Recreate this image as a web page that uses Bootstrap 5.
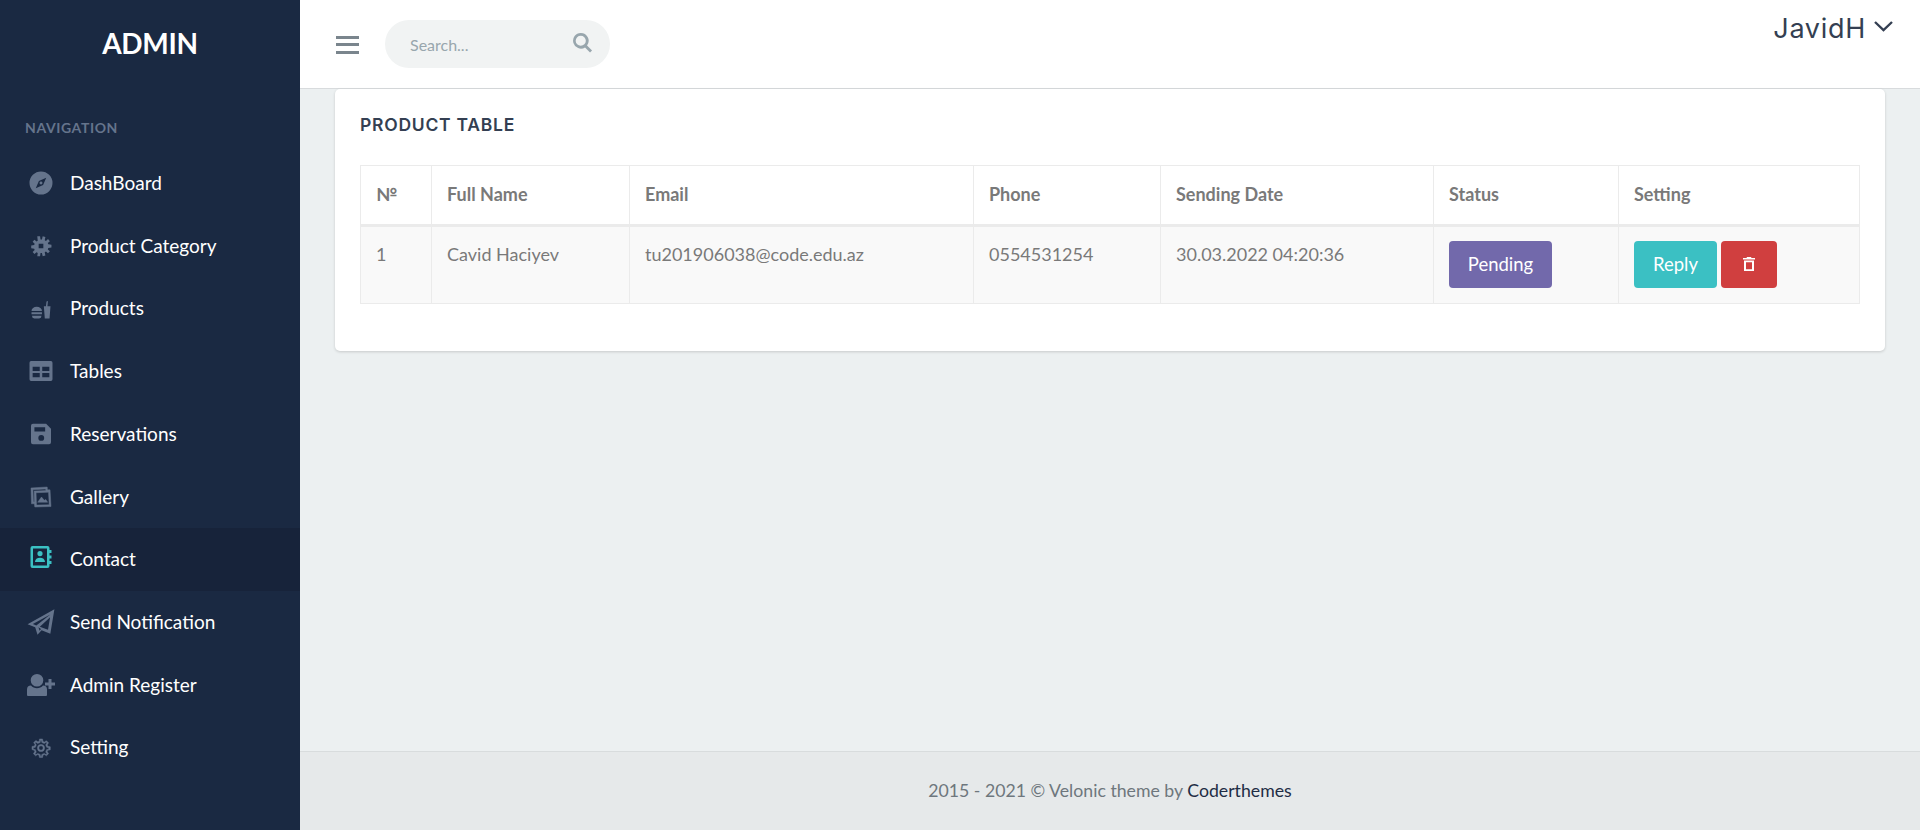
<!DOCTYPE html>
<html lang="en">
<head>
  <meta charset="UTF-8" />
  <meta name="viewport" content="width=device-width, initial-scale=1">
  <title>Admin - Contact</title>
  <link href="https://cdn.jsdelivr.net/npm/bootstrap@5.3.3/dist/css/bootstrap.min.css" rel="stylesheet" />
  <style>
body {
  font-family: Lato, "Liberation Sans", sans-serif;
  font-size: 18px;
  background: #ecf0f1;
  color: #797979;
  overflow: hidden;
}
.page-wrap { height: 830px; }
.side-bar { width: 300px; background: #1a2942; flex-shrink: 0; }
.side-logo { height: 88px; color: #fff; font-size: 28px; font-weight: 700; letter-spacing: -0.3px; line-height: 86px; text-align: center; }
.side-title { color: #65748c; font-size: 14px; font-weight: 700; letter-spacing: .6px; padding: 30px 25px 0; line-height: 20px; height: 64px; }
.side-link { height: 62.7px; padding-left: 27px; gap: 15px; color: #fff; font-size: 19px; text-decoration: none; }
.side-link:hover { color: #fff; }
.side-link.current { background: #17233a; }
.side-link svg { width: 28px; height: 28px; fill: #65748c; flex-shrink: 0; }
.side-link svg.thick-icon { stroke: #65748c; stroke-width: .5; }
.side-link.current svg { fill: #3bc0c3; }
.main-col { min-width: 0; }
.top-bar { height: 89px; background: #fff; border-bottom: 1px solid #d8dbdd; padding-left: 36px; }
.menu-btn { width: 23px; height: 18px; border-top: 3px solid #7a858d; border-bottom: 3px solid #7a858d; position: relative; margin-top: 1px; }
.menu-btn::after { content: ""; position: absolute; left: 0; right: 0; top: 4.5px; height: 3px; background: #7a858d; }
.search-box { width: 225px; height: 48px; margin-left: 26px; background: #f1f3f3; border-radius: 24px; padding: 0 17px 0 25px; }
.search-box input { border: 0; background: none; outline: 0; width: 150px; font-size: 16px; color: #98a6ad; font-family: inherit; padding: 1px 0 0; }
.search-box input::placeholder { color: #98a6ad; }
.search-box svg { width: 21px; height: 21px; fill: #98a6ad; margin-top: -3px; }
.user-name { font-family: Inter, "Open Sans", sans-serif; font-size: 27px; color: #343f52; line-height: 30px; margin: 14px 26px 0 0; letter-spacing: .7px; }
.user-name svg { width: 21px; height: 12px; margin-left: 7px; margin-top: -9px; }
.content-area { padding: 0 35px; }
.table-panel { height: 262px; border: 0; border-radius: 5px; box-shadow: 0 1px 3px rgba(0,0,0,.16); padding: 24px 25px; color: #797979; }
.panel-heading { font-family: Inter, "Open Sans", sans-serif; font-size: 17.5px; font-weight: 600; letter-spacing: .75px; color: #343f52; line-height: 24px; margin-bottom: 28px; }
.data-table { table-layout: fixed; width: 1500px; margin: 0; color: #797979; --bs-table-color: #797979; --bs-table-border-color: #ebebeb; --bs-table-striped-color: #797979; --bs-table-striped-bg: #f9f9f9; border-color: #ebebeb; }
.data-table > :not(caption) > * > * { padding: 15px; box-shadow: none; }
.data-table > thead > tr > th { height: 59px; font-size: 18px; font-weight: 700; color: #797979; border-bottom-width: 3px; vertical-align: middle; padding-bottom: 16px; }
.data-table > tbody > tr > td { height: 78px; font-size: 18px; padding-top: 14px; vertical-align: top; }
.data-table > tbody { border-top: 0; }
.data-table tbody tr { background: #f9f9f9; }
.col-no { width: 71px; } .col-name { width: 198px; } .col-mail { width: 344px; } .col-phone { width: 187px; }
.col-date { width: 273px; } .col-state { width: 185px; }
.act-btn { height: 47px; border: 0; border-radius: 4px; color: #fff; font-size: 18.5px; padding: 0; }
.act-btn:hover { color: #fff; }
.act-pending { width: 103px; background: #7269ab; }
.act-reply { width: 83px; background: #3bc0c3; margin-right: 4px; }
.act-del { width: 56px; background: #d03f3f; }
.act-del svg { width: 12px; height: 14px; fill: #fff; margin-top: -3px; }
.page-foot { height: 79px; background: #e6e9ea; border-top: 1px solid #d8dcdd; color: #6e777d; font-size: 17.7px; }
.page-foot a { color: #1f2d45; text-decoration: none; }
  </style>
</head>
<body>
  <div class="d-flex page-wrap">
    <aside class="side-bar">
      <div class="side-logo">ADMIN</div>
      <div class="side-title">NAVIGATION</div>
      <nav class="d-flex flex-column">
        <a class="side-link d-flex align-items-center" href="#">
          <svg viewBox="-1.400 -1.400 26.800 26.800"><path fill-rule="evenodd" d="M12 1a11 11 0 1 0 0 22 11 11 0 0 0 0-22zm5 6-3 7-7 3 3-7zm-5 3.600a1.400 1.400 0 1 0 0 2.800 1.400 1.400 0 0 0 0-2.800z"/></svg>
          DashBoard</a>
        <a class="side-link d-flex align-items-center" href="#">
          <svg viewBox="-3 -3 30 30"><path fill-rule="evenodd" d="M8 1.500h3l.5 3.500h1.500l.8-3.500 2.900.8-.7 3.500 1.300.8 2.200-2 2 2.200-2.200 2 .5 1.400 3.400.5v3l-3.400.5-.5 1.500 2.200 2-2 2.200-2.200-2-1.300.8.7 3.500-2.900.8-.8-3.500H11.500L11 23H8l.5-3.600-1.300-.8-2.200 2L3 18.400l2.200-2-.5-1.500-3.200-.5v-3l3.200-.5.5-1.400L3 7.500l2-2.200 2.200 2 1.300-.8zm1.500 8v5h5v-5z"/></svg>
          Product Category</a>
        <a class="side-link d-flex align-items-center" href="#">
          <svg viewBox="-2.750 -2.750 29.500 29.500"><path d="M15 9h2.200l.6-5 1.500-.3-.5 5.300H22l-1 13h-5zM2 14a5 4 0 0 1 11 0zM2 15.500h11v2H2zM2.500 19h10a3 3 0 0 1-2.500 3H5a3 3 0 0 1-2.500-3z"/></svg>
          Products</a>
        <a class="side-link d-flex align-items-center" href="#">
          <svg viewBox="-1.400 -1.400 26.800 26.800"><path fill-rule="evenodd" d="M2.500 2.500h19A1.500 1.500 0 0 1 23 4v16a1.500 1.500 0 0 1-1.500 1.500h-19A1.500 1.500 0 0 1 1 20V4a1.500 1.500 0 0 1 1.500-1.500zM4 8v4h6.800V8zm9.200 0v4H20V8zM4 14v4h6.800v-4zm9.200 0v4H20v-4z"/></svg>
          Tables</a>
        <a class="side-link d-flex align-items-center" href="#">
          <svg viewBox="-2.600 -2.350 28.700 28.700"><path fill-rule="evenodd" d="M3.500 1.500H17l5 5v14a2 2 0 0 1-2 2H3.500a2 2 0 0 1-2-2v-17a2 2 0 0 1 2-2zM5 5v4.500h11V5zm7 8a3 3 0 1 0 0 6 3 3 0 0 0 0-6z"/></svg>
          Reservations</a>
        <a class="side-link d-flex align-items-center" href="#">
          <svg class="thick-icon" viewBox="-2.200 -2.200 29.400 29.400"><path fill-rule="evenodd" d="M2 3l17-1 .3 3H22l1 17.500-17 .5-.5-3.500-3 .2zm2 2 .6 12.500 1 0L5.300 6.300 17.500 5.800l-.1-1.700zM7.300 8l.5 13 13.300-.3L20.400 7.500zM9 18l4-5.500 3 3.500 1.500-1 2 3z"/></svg>
          Gallery</a>
        <a class="side-link current d-flex align-items-center" href="#">
          <svg viewBox="-1.500 0 28 28"><path fill-rule="evenodd" d="M4 1h15a2 2 0 0 1 2 2v2h2v3h-2v2.500h2v3h-2V16h2v3h-2v2a2 2 0 0 1-2 2H4a2 2 0 0 1-2-2V3a2 2 0 0 1 2-2zm.500 2.500v17h14v-17zM11.500 6a2.600 2.600 0 1 1 0 5.200 2.600 2.600 0 0 1 0-5.200zM6.500 17c0-2.800 2.200-4.300 5-4.300s5 1.500 5 4.300z"/></svg>
          Contact</a>
        <a class="side-link d-flex align-items-center" href="#">
          <svg viewBox="0 0 24 24"><path fill-rule="evenodd" d="M23.500 1 20 22l-7.500-3-3.500 4-2-6.500L.5 14zM20 5.500 5 13.800l3 1.200zM9.800 16.500l1 3 1.200-1.500zm10-8.500L11 16l7 2.700z"/></svg>
          Send Notification</a>
        <a class="side-link d-flex align-items-center" href="#">
          <svg viewBox="0 0 28 24"><path d="M10 1a6.300 6.300 0 1 1 0 12.600A6.300 6.300 0 0 1 10 1zM4 12.500c1.500 1.800 3.700 2.700 6 2.700s4.500-.9 6-2.700a4 4 0 0 1 4 4V22a1 1 0 0 1-1 1H1a1 1 0 0 1-1-1v-5.500a4 4 0 0 1 4-4zM21.500 6h3v3.500H28v3h-3.500V16h-3v-3.500H18v-3h3.500z"/></svg>
          Admin Register</a>
        <a class="side-link d-flex align-items-center" href="#">
          <svg class="thick-icon" viewBox="-3.500 -3.500 31 31"><path fill-rule="evenodd" d="M10.300 2h3.400l.5 2.700 1.500.7 2.300-1.500 2.400 2.400-1.500 2.300.7 1.500 2.700.5v3.400l-2.700.5-.7 1.500 1.500 2.300-2.400 2.400-2.300-1.500-1.500.7-.5 2.700h-3.400l-.5-2.700-1.500-.7-2.300 1.500-2.400-2.400 1.500-2.300-.7-1.500L2 13.700v-3.400l2.700-.5.7-1.500-1.500-2.300 2.400-2.400 2.300 1.500 1.500-.7zm1.200 1.600-.4 2.300-2.700 1.100-2-1.300-.9.900 1.300 2-1.100 2.700-2.300.4v1.600l2.300.4 1.100 2.700-1.300 2 .9.900 2-1.300 2.700 1.100.4 2.300h1.000l.4-2.300 2.700-1.100 2 1.300.9-.9-1.300-2 1.100-2.700 2.300-.4v-1.600l-2.300-.4-1.100-2.700 1.300-2-.9-.9-2 1.300-2.700-1.100-.4-2.300zM12 8a4 4 0 1 1 0 8 4 4 0 0 1 0-8zm0 1.600a2.400 2.400 0 1 0 0 4.800 2.400 2.400 0 0 0 0-4.800z"/></svg>
          Setting</a>
      </nav>
    </aside>

    <div class="main-col flex-grow-1 d-flex flex-column">
      <header class="top-bar d-flex align-items-center">
        <div class="menu-btn"></div>
        <div class="search-box d-flex align-items-center justify-content-between">
          <input type="text" placeholder="Search..." />
          <svg viewBox="0 0 24 24"><path d="M10 1a9 9 0 0 1 7.200 14.400l5.700 5.700-2.300 2.300-5.700-5.700A9 9 0 1 1 10 1zm0 3.200a5.800 5.800 0 1 0 0 11.600 5.800 5.800 0 0 0 0-11.600z"/></svg>
        </div>
        <div class="user-name ms-auto align-self-start">JavidH<svg viewBox="0 0 21 12"><path d="M2 2l8.500 8L19 2" fill="none" stroke="#343f52" stroke-width="2.400"/></svg></div>
      </header>

      <main class="content-area flex-grow-1">
        <div class="card table-panel">
          <h4 class="panel-heading">PRODUCT TABLE</h4>
          <table class="table table-bordered data-table">
            <colgroup>
              <col class="col-no"><col class="col-name"><col class="col-mail"><col class="col-phone"><col class="col-date"><col class="col-state"><col>
            </colgroup>
            <thead>
              <tr>
                <th>№</th>
                <th>Full Name</th>
                <th>Email</th>
                <th>Phone</th>
                <th>Sending Date</th>
                <th>Status</th>
                <th>Setting</th>
              </tr>
            </thead>
            <tbody>
              <tr>
                <td>1</td>
                <td>Cavid Haciyev</td>
                <td>tu201906038@code.edu.az</td>
                <td>0554531254</td>
                <td>30.03.2022 04:20:36</td>
                <td><button class="btn act-btn act-pending">Pending</button></td>
                <td><button class="btn act-btn act-reply">Reply</button><button class="btn act-btn act-del"><svg viewBox="0 0 12 14"><path fill-rule="evenodd" d="M4 0h4l.5 1H12v1.500H0V1h3.500zM1 3.500h10V14H1zm2 1.800V12.200h6V5.300z"/></svg></button></td>
              </tr>
            </tbody>
          </table>
        </div>
      </main>

      <footer class="page-foot d-flex align-items-center justify-content-center">
        <span>2015 - 2021 © Velonic theme by <a href="#">Coderthemes</a></span>
      </footer>
    </div>
  </div>
  <script src="https://cdn.jsdelivr.net/npm/bootstrap@5.3.3/dist/js/bootstrap.bundle.min.js"></script>
</body>
</html>
